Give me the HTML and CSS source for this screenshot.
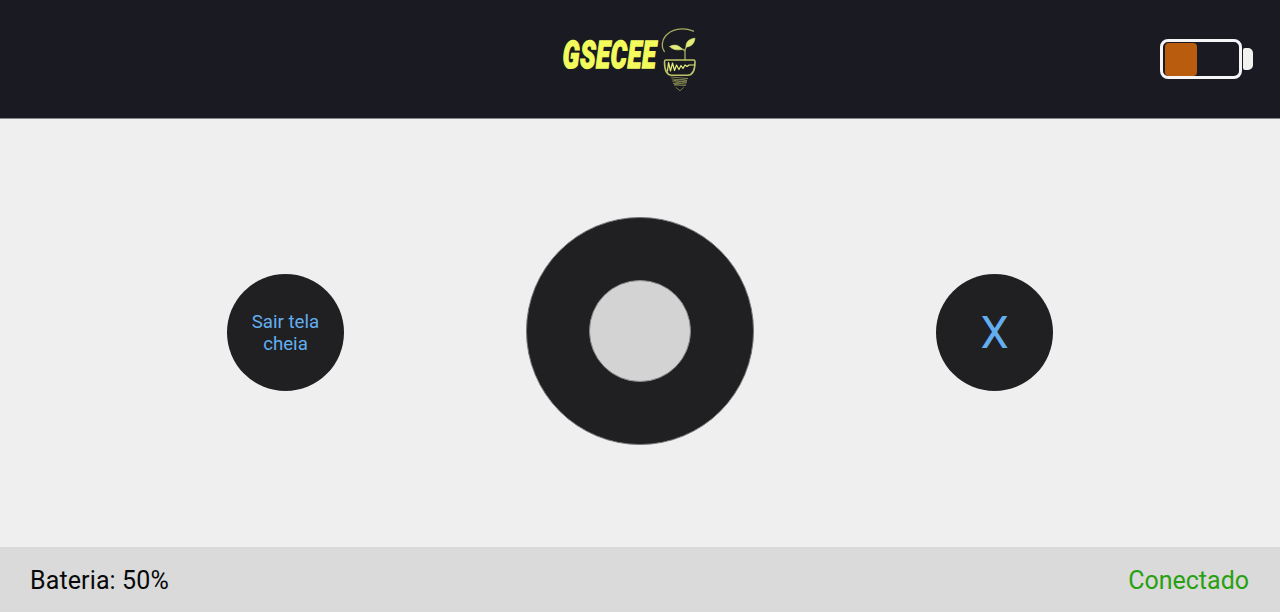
FILE: index.html
```html
<!DOCTYPE html>
<html lang="pt-BR">
<head>
<meta charset="utf-8">
<title>GSECEE</title>
<link rel="stylesheet" href="styles.css">
</head>
<body>
<header class="topbar">
  <svg class="logo" viewBox="0 0 150 80" role="img" aria-label="GSECEE">
    <g transform="translate(7.500 47.800) skewX(-1)">
      <text class="logo-text" x="0" y="0" textLength="94" lengthAdjust="spacingAndGlyphs">GSECEE</text>
    </g>
    <g class="bulb">
      <path d="M109.3 31.5C106.2 27.5 106.600 20.500 110.500 16C116 9.500 127 6.500 138.500 11.200"/>
      <path d="M130 40V31C130 27 133 24.500 137 21.500M130 31C128 28.500 124 27.500 119 27"/>
      <path class="leaf" d="M114.800 26.500C119 23.800 124.500 25 127 29.500C122 30.300 117.500 30 114.800 26.500Z"/>
      <path class="leaf" d="M131 27C130.500 22 134 18.700 140 18.200C139.500 23 136.500 27 131 27Z"/>
      <path class="glass" d="M110.500 40H139Q140 40 140 42C140 50 137.500 55.200 132.500 55.200H117C112 55.200 109.500 50 109.500 42Q109.500 40 110.500 40Z"/>
      <path class="wave" d="M112.500 51L113.500 42.500L115.500 51L117.500 43L119.500 50.500L121.500 45L124 49.500L126 45.500L128 48.500L130 45L132 46.500L134 45H139"/>
      <path class="thread" d="M116 57L133 58.500L117.500 61L132 62L119 65L130.500 65.500M117 59L132 60.500L118 63.500L131 64M121 67.500L125 70.800L128.500 67.500"/>
    </g>
  </svg>
  <div class="battery">
    <div class="battery-body"><div class="battery-level"></div></div>
    <div class="battery-cap"></div>
  </div>
</header>
<main class="controls">
  <button class="round-button">Sair tela cheia</button>
  <div class="joystick"><div class="stick"></div></div>
  <button class="round-button action">X</button>
</main>
<footer class="statusbar">
  <span class="charge">Bateria: 50%</span>
  <span class="connected">Conectado</span>
</footer>
</body>
</html>
```

FILE: styles.css
```css
* { box-sizing: border-box; }

body {
  margin: 0;
  height: 100vh;
  display: flex;
  flex-direction: column;
  background: #efefef;
  font-family: Roboto, sans-serif;
}

.topbar {
  height: 118.5px;
  flex: none;
  display: grid;
  grid-template-columns: 1fr 150px 1fr;
  align-items: center;
  padding: 0 27px 0 7px;
  border-bottom: 1px solid #85858b;
  background: #1a1a22;
}

.logo {
  grid-column: 2;
  width: 150px;
  height: 80px;
  margin-top: 2px;
}

.logo-text {
  font: italic 900 38px Roboto, sans-serif;
  letter-spacing: 1.2px;
  fill: #f3fb5c;
  stroke: #f3fb5c;
  stroke-width: 1.5px;
}

.bulb {
  fill: none;
  stroke: #a7ac60;
  stroke-width: 1.3;
  stroke-linecap: round;
  stroke-linejoin: round;
}

.leaf { fill: #e3ee79; stroke: #d5df70; stroke-width: 0.6; }
.glass { stroke: #bcc467; stroke-width: 1.6; }
.wave { stroke: #e6f078; stroke-width: 1.2; }
.thread { stroke: #80844f; stroke-width: 0.9; }

.battery {
  justify-self: end;
  display: flex;
  align-items: center;
  gap: 1px;
}

.battery-body {
  width: 82px;
  height: 40px;
  padding: 1px 2px;
  border: 3px solid #f5f5f7;
  border-radius: 8px;
}

.battery-level {
  width: 32px;
  height: 33px;
  border-radius: 4px;
  background: #ba5c0e;
}

.battery-cap {
  width: 10px;
  height: 22px;
  border-radius: 2px 5px 5px 2px;
  background: #f1f2f0;
}

.controls {
  flex: 1;
  display: flex;
  align-items: center;
  justify-content: space-between;
  padding: 0 227px;
}

.round-button {
  width: 117px;
  height: 117px;
  padding: 0 20px;
  border: 0;
  border-radius: 50%;
  background: #202022;
  color: #62aeef;
  font: 18.7px/22px Roboto, sans-serif;
}

.action { font-size: 45px; line-height: 53px; }

.joystick {
  width: 228px;
  height: 228px;
  margin-bottom: 4px;
  display: grid;
  place-items: center;
  border: 1px solid #77777a;
  border-radius: 50%;
  background: #202022;
}

.stick {
  width: 102px;
  height: 102px;
  border: 1px solid #88888a;
  border-radius: 50%;
  background: #d3d3d3;
}

.statusbar {
  height: 65px;
  flex: none;
  display: flex;
  align-items: center;
  justify-content: space-between;
  padding: 1px 31px 0 30px;
  background: #dadada;
  color: #080808;
  font-size: 25px;
}

.charge { letter-spacing: 0.12px; }
.connected { color: #29a011; }
```
